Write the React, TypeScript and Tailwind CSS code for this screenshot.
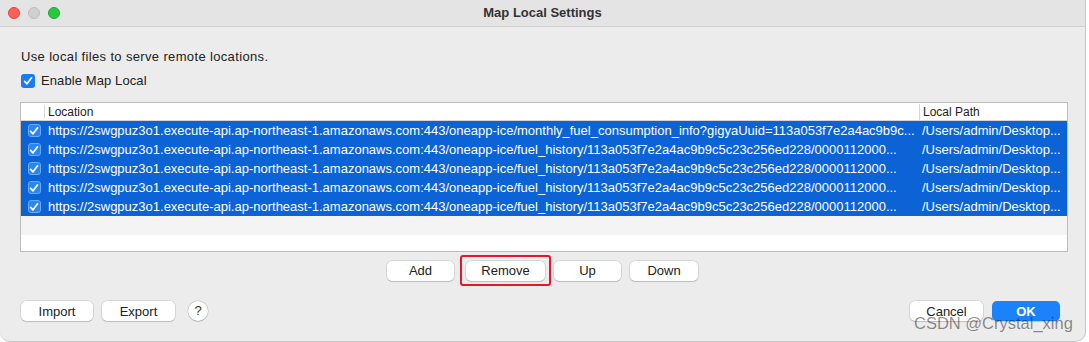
import React from 'react';

type Row = {
  location: string;
  path: string;
};

const base = 'https://2swgpuz3o1.execute-api.ap-northeast-1.amazonaws.com:443/oneapp-ice/';

const rows: Row[] = [
  {
    location: base + 'monthly_fuel_consumption_info?gigyaUuid=113a053f7e2a4ac9b9c...',
    path: '/Users/admin/Desktop...',
  },
  { location: base + 'fuel_history/113a053f7e2a4ac9b9c5c23c256ed228/0000112000...', path: '/Users/admin/Desktop...' },
  { location: base + 'fuel_history/113a053f7e2a4ac9b9c5c23c256ed228/0000112000...', path: '/Users/admin/Desktop...' },
  { location: base + 'fuel_history/113a053f7e2a4ac9b9c5c23c256ed228/0000112000...', path: '/Users/admin/Desktop...' },
  { location: base + 'fuel_history/113a053f7e2a4ac9b9c5c23c256ed228/0000112000...', path: '/Users/admin/Desktop...' },
];

const Check = ({ className }: { className: string }) => (
  <span className={`flex items-center justify-center rounded-[3px] ${className}`}>
    <svg width="10" height="10" viewBox="0 0 10 10" fill="none">
      <path d="M1.6 5.3 L4 7.8 L8.6 1.8" stroke="white" strokeWidth="1.7" strokeLinecap="round" strokeLinejoin="round" />
    </svg>
  </span>
);

const Button = ({ label, className = '' }: { label: string; className?: string }) => (
  <button
    className={`h-[20px] rounded-[5px] bg-white text-[13px] leading-none text-[#222] shadow-[0_0_0_0.5px_rgba(0,0,0,0.18),0_1px_1px_rgba(0,0,0,0.12)] ${className}`}
  >
    {label}
  </button>
);

const App: React.FC = () => {
  return (
    <div
      className="w-[1089px] h-[342px] overflow-hidden bg-white"
      style={{ fontFamily: '"Liberation Sans", Arial, sans-serif' }}
    >
      <div className="relative flex h-full w-[1086px] flex-col rounded-b-[10px] border-r border-b border-[#c9c9c9] bg-[#ececec]">
        {/* title bar */}
        <div className="relative flex h-[27px] items-center justify-center border-b border-[#cfcfcf] bg-[#e4e4e4]">
          <div className="absolute left-[8px] top-[7px] flex gap-[8px]">
            <span className="h-[12px] w-[12px] rounded-full bg-[#fe5f57] border border-[#e0443e]" />
            <span className="h-[12px] w-[12px] rounded-full bg-[#d0d0d0] border border-[#bdbdbd]" />
            <span className="h-[12px] w-[12px] rounded-full bg-[#28c840] border border-[#1aab29]" />
          </div>
          <span className="text-[13px] font-bold text-[#333]">Map Local Settings</span>
        </div>

        <div className="flex flex-1 flex-col px-[20px]">
          <p className="mt-[22px] pl-[1px] text-[13px] leading-[16px] tracking-[0.35px] text-[#222]">
            Use local files to serve remote locations.
          </p>
          <label className="mt-[9px] flex h-[14px] items-center gap-[6px] pl-[1px] text-[13px] leading-[14px] tracking-[0.1px] text-[#222]">
            <Check className="h-[14px] w-[14px] bg-[#1a7cf5]" />
            Enable Map Local
          </label>

          {/* table */}
          <div className="mt-[14px] flex h-[150px] w-[1048px] flex-col overflow-hidden border border-[#bdbdbd] bg-white">
            <div className="flex h-[18px] items-center border-b border-[#d4d4d4] text-[12px] leading-[16px] text-[#222]">
              <div className="h-[13px] w-[24px] border-r border-[#d8d8d8]" />
              <div className="flex-1 pl-[3px]">Location</div>
              <div className="h-[16px] w-[148px] border-l border-[#d8d8d8] pl-[3px]">Local Path</div>
            </div>
            {rows.map((r, i) => (
              <div key={i} className="flex h-[19px] items-center bg-[#0b63d6] text-[13px] leading-[19px] text-white">
                <div className="flex w-[25px] justify-center pl-[1px]">
                  <Check className="h-[13px] w-[13px] bg-[#2a86f7] border border-[#6aaaf7]" />
                </div>
                <div className="flex-1 whitespace-nowrap overflow-hidden pl-[2px]">{r.location}</div>
                <div className="w-[148px] whitespace-nowrap overflow-hidden pl-[3px]">{r.path}</div>
              </div>
            ))}
            <div className="h-[19px] bg-[#f4f4f4]" />
          </div>

          {/* table buttons */}
          <div className="mt-[3px] flex justify-center">
            <div className="flex items-center">
              <Button label="Add" className="w-[67px]" />
              <div className="ml-[6px] flex h-[31px] w-[91px] items-center justify-center rounded-[3px] border-2 border-[#e8162b]">
                <Button label="Remove" className="w-[79px]" />
              </div>
              <Button label="Up" className="ml-[3px] w-[67px]" />
              <Button label="Down" className="ml-[9px] w-[68px]" />
            </div>
          </div>

          {/* bottom row */}
          <div className="mt-[15px] flex items-center pl-[1px]">
            <Button label="Import" className="w-[72px]" />
            <Button label="Export" className="ml-[9px] w-[73px]" />
            <span className="ml-[13px] flex h-[20px] w-[20px] items-center justify-center rounded-full bg-white text-[13px] text-[#333] shadow-[0_0_0_0.5px_rgba(0,0,0,0.2),0_1px_1px_rgba(0,0,0,0.12)]">
              ?
            </span>
            <div className="flex-1" />
            <Button label="Cancel" className="w-[73px]" />
            <button className="ml-[9px] h-[20px] w-[68px] rounded-[5px] bg-[#1a82fb] text-[13px] font-bold leading-none text-white shadow-[0_1px_1px_rgba(0,0,0,0.15)]">
              OK
            </button>
            <div className="w-[5px]" />
          </div>
        </div>

        {/* watermark over the dialog buttons */}
        <span className="absolute left-[914px] top-[313px] text-[16.5px] leading-[20px] text-[#000]/45">
          CSDN @Crystal_xing
        </span>
      </div>
    </div>
  );
};

export default App;
